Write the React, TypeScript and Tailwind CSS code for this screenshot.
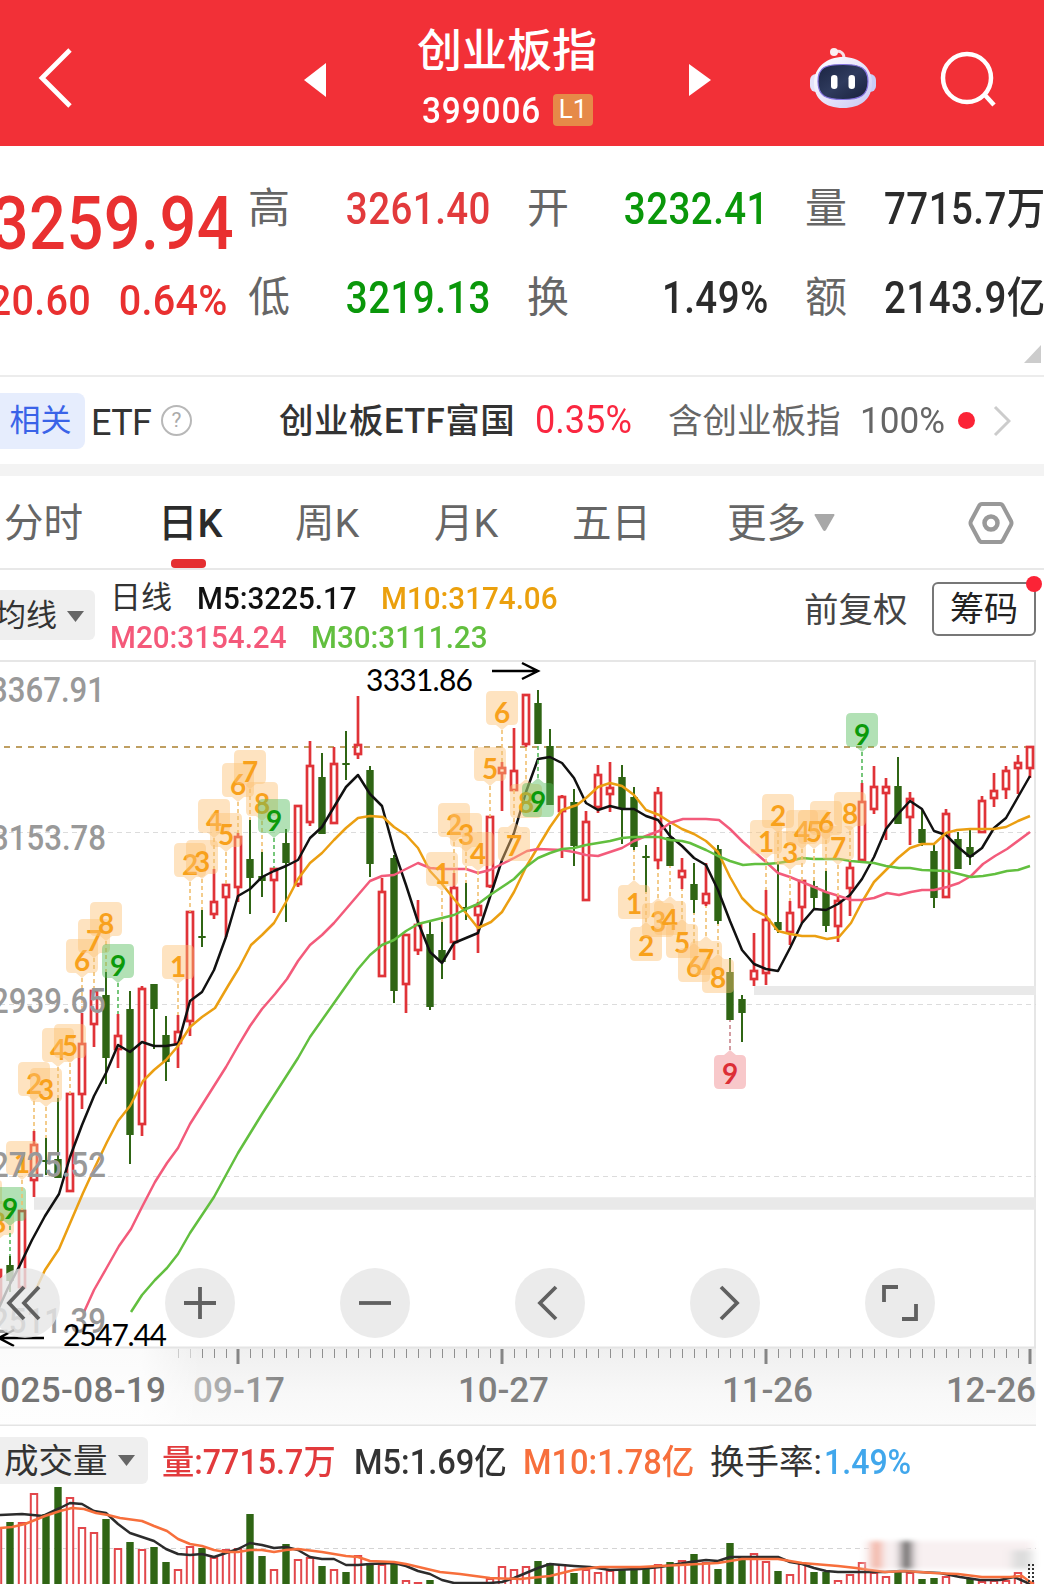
import type { ReactNode } from "react";

type Candle = [number, number, number, number, "r" | "g"];
type Badge = [number, number, number, "o" | "g" | "r", "up" | "down", number];

const STEP = 12;
const FIRST_X = -2;

// high, bodyTop, bodyBottom, low, colour
const candles: Candle[] = [
  [1270, 1270, 1302, 1302, "r"], [1256, 1265, 1281, 1292, "g"], [1210, 1211, 1287, 1287, "r"],
  [1131, 1145, 1180, 1197, "r"], [1138, 1160, 1162, 1175, "g"], [1098, 1159, 1178, 1178, "g"],
  [1094, 1094, 1191, 1191, "r"], [1013, 1044, 1094, 1109, "r"], [990, 991, 1024, 1047, "r"],
  [972, 995, 1058, 1084, "g"], [1014, 1036, 1049, 1068, "r"], [991, 1009, 1135, 1164, "g"],
  [986, 989, 1124, 1136, "r"], [984, 984, 1009, 1049, "g"], [1016, 1035, 1062, 1081, "g"],
  [1015, 1032, 1043, 1068, "r"], [912, 912, 1021, 1036, "r"], [910, 936, 938, 947, "g"],
  [869, 902, 914, 919, "r"], [884, 885, 897, 937, "r"], [833, 837, 887, 902, "r"],
  [820, 859, 878, 914, "g"], [852, 876, 881, 897, "g"], [868, 869, 880, 913, "r"],
  [829, 843, 863, 922, "g"], [805, 806, 884, 887, "r"], [741, 766, 822, 826, "r"],
  [753, 777, 834, 834, "g"], [747, 764, 823, 823, "r"], [731, 763, 765, 780, "g"],
  [696, 745, 754, 759, "r"], [766, 770, 864, 877, "g"], [878, 892, 976, 976, "r"],
  [855, 858, 991, 1003, "g"], [934, 935, 984, 1013, "r"], [900, 925, 950, 955, "r"],
  [922, 934, 1007, 1010, "g"], [922, 950, 962, 979, "g"], [873, 888, 942, 960, "r"],
  [883, 907, 909, 920, "g"], [902, 906, 915, 953, "r"], [817, 817, 886, 888, "r"],
  [762, 768, 773, 811, "r"], [728, 771, 790, 790, "r"], [694, 695, 744, 747, "r"],
  [690, 703, 744, 744, "g"], [729, 746, 805, 805, "g"], [795, 797, 811, 858, "r"],
  [789, 802, 846, 866, "g"], [811, 822, 900, 900, "r"], [765, 775, 807, 813, "r"],
  [762, 788, 794, 812, "r"], [765, 777, 809, 844, "g"], [787, 797, 847, 850, "g"],
  [845, 856, 858, 892, "g"], [787, 793, 860, 869, "r"], [825, 837, 866, 866, "g"],
  [858, 871, 877, 889, "r"], [863, 884, 900, 913, "g"], [863, 894, 903, 906, "r"],
  [845, 849, 921, 924, "g"], [958, 972, 1020, 1020, "g"], [995, 999, 1013, 1042, "g"],
  [933, 971, 979, 986, "r"], [890, 920, 973, 985, "r"], [864, 922, 930, 933, "g"],
  [901, 913, 932, 945, "r"], [881, 881, 907, 923, "r"], [881, 886, 898, 910, "g"],
  [871, 892, 926, 932, "g"], [896, 901, 926, 942, "r"], [861, 868, 888, 916, "r"],
  [783, 802, 860, 860, "r"], [766, 787, 809, 814, "r"], [778, 787, 793, 840, "r"],
  [757, 786, 824, 824, "g"], [792, 799, 817, 845, "r"], [809, 829, 843, 846, "g"],
  [843, 851, 898, 908, "g"], [809, 814, 897, 897, "r"], [832, 839, 869, 869, "g"],
  [830, 847, 857, 865, "g"], [796, 801, 832, 832, "r"], [773, 791, 798, 807, "r"],
  [766, 771, 789, 799, "r"], [755, 763, 768, 794, "r"], [746, 747, 768, 778, "r"],
];

const volumeTops: number[] = [
  1527, 1522, 1522, 1493, 1514, 1487, 1497, 1527, 1532, 1519, 1548, 1542, 1549, 1547, 1562,
  1569, 1546, 1548, 1557, 1549, 1548, 1514, 1556, 1569, 1544, 1559, 1557, 1566, 1569, 1572,
  1555, 1563, 1564, 1563, 1580, 1582, 1580, 1590, 1590, 1590, 1590, 1578, 1566, 1569, 1566,
  1561, 1563, 1564, 1573, 1569, 1572, 1570, 1569, 1568, 1568, 1564, 1562, 1560, 1554, 1562,
  1569, 1543, 1558, 1553, 1561, 1571, 1574, 1563, 1572, 1572, 1580, 1574, 1562, 1572, 1576,
  1572, 1572, 1579, 1578, 1576, 1584, 1579, 1581, 1580, 1580, 1572, 1582,
];
const volumeGreen = [
  1, 4, 5, 9, 11, 13, 14, 17, 21, 22, 24, 27, 29, 31, 33, 36, 45, 46, 48, 52, 53, 54, 56, 58, 60,
  61, 62, 65, 68, 69, 75, 77, 78, 80, 81,
];

const ma5 =
  "-2,1310 8,1288 20,1265 32,1240 45,1216 59,1194 70,1157 82,1125 94,1096 106,1073 118,1045 130,1052 142,1042 154,1046 166,1046 178,1044 190,1001 202,992 214,970 226,937 238,896 250,889 262,877 274,871 286,866 298,860 310,838 322,827 334,807 346,787 358,775 370,794 382,806 394,850 406,885 418,922 430,952 442,963 454,943 466,938 478,933 490,897 502,860 514,833 526,792 538,759 550,757 562,763 574,778 586,803 598,810 610,806 622,809 634,809 646,816 658,820 670,836 682,846 694,858 706,865 718,890 730,921 742,950 754,964 766,969 778,971 790,948 802,923 814,909 826,910 838,904 850,895 862,879 874,857 886,829 898,814 910,801 922,809 934,831 946,835 958,847 970,857 982,848 994,828 1006,818 1018,797 1030,776";
const ma10 =
  "34,1292 38,1285 45,1270 59,1249 71,1221 83,1193 95,1167 107,1142 118,1121 130,1106 143,1081 154,1070 166,1060 178,1046 190,1027 202,1017 215,1008 228,986 239,968 251,945 262,935 274,923 286,902 298,879 310,863 322,853 334,840 346,828 358,818 370,816 383,817 394,827 406,835 418,848 430,871 442,884 454,899 466,913 478,928 491,922 502,912 514,892 526,867 538,847 550,827 562,810 577,805 586,798 598,787 610,783 622,786 634,795 646,810 659,815 670,822 682,829 694,834 706,841 718,852 730,877 742,898 754,910 766,916 778,931 790,934 802,936 815,936 827,939 839,937 851,923 862,902 874,882 886,870 898,858 910,848 922,844 934,844 946,833 957,830 970,829 994,829 1006,827 1018,821 1030,816";
const ma20 =
  "84,1312 94,1290 106,1269 119,1246 131,1229 142,1207 155,1182 167,1163 178,1148 190,1124 202,1105 226,1067 238,1046 250,1026 262,1009 275,994 287,979 298,961 310,945 322,935 334,923 352,902 370,881 382,876 394,875 406,869 418,863 430,868 442,869 466,869 478,873 490,870 502,864 514,858 527,851 538,849 562,850 574,852 586,855 598,856 610,852 622,848 634,841 646,836 659,831 670,823 683,819 694,819 706,819 719,820 730,829 743,842 766,862 778,873 790,877 802,882 814,887 826,892 839,896 851,900 862,900 874,898 887,893 899,895 911,892 922,890 934,890 947,887 959,883 971,876 983,864 995,856 1007,849 1030,832";
const ma30 =
  "131,1312 142,1295 155,1280 167,1268 178,1254 190,1233 214,1197 238,1153 262,1114 298,1058 310,1037 334,1003 358,969 370,955 382,945 394,940 406,931 418,924 430,921 454,915 466,909 478,904 490,895 514,879 526,867 538,858 550,853 562,849 574,848 586,845 610,841 622,838 634,837 646,837 659,837 670,840 682,841 690,843 706,850 718,856 730,861 743,865 755,864 766,864 778,863 790,861 802,858 814,859 839,859 851,861 862,862 874,863 886,866 899,868 910,868 922,870 947,871 959,874 971,877 983,876 995,874 1007,871 1018,870 1030,866";

const vol5 =
  "0,1515 22,1514 43,1516 60,1508 70,1503 82,1504 94,1511 106,1513 118,1524 130,1533 142,1537 154,1541 166,1549 178,1554 190,1555 202,1554 214,1557 226,1553 238,1549 250,1543 262,1545 274,1548 286,1547 298,1550 310,1557 322,1559 334,1559 346,1565 358,1565 370,1564 394,1563 406,1566 418,1571 430,1574 442,1580 454,1583 490,1583 502,1582 514,1578 526,1573 538,1568 550,1564 562,1565 574,1566 590,1567 610,1570 640,1569 660,1567 690,1562 706,1560 718,1561 730,1557 742,1557 778,1557 790,1562 802,1564 814,1568 826,1571 838,1572 870,1572 885,1572 900,1571 920,1572 940,1573 960,1577 980,1580 1000,1580 1014,1577 1030,1584";
const vol10 =
  "0,1528 12,1527 25,1524 45,1516 60,1511 72,1508 84,1509 96,1513 108,1515 120,1518 142,1521 154,1526 167,1531 178,1539 190,1544 202,1546 214,1550 226,1552 238,1552 250,1550 262,1550 274,1552 286,1550 298,1549 322,1552 346,1556 358,1557 370,1561 394,1562 406,1564 440,1572 460,1574 490,1578 520,1579 550,1576 574,1570 600,1567 640,1567 680,1565 718,1563 742,1559 778,1559 802,1563 826,1565 838,1566 856,1568 885,1572 905,1571 934,1573 958,1574 982,1577 1010,1577 1022,1576 1033,1584";

// x, box top, digit, colour, pointer direction, stem end
const badges: Badge[] = [
  [-2, 1201, 8, "o", "down", 1270], [10, 1187, 9, "g", "down", 1256], [22, 1141, 1, "o", "down", 1210],
  [34, 1062, 2, "o", "down", 1131], [46, 1068, 3, "o", "down", 1138], [58, 1028, 4, "o", "down", 1098],
  [70, 1024, 5, "o", "down", 1094], [82, 939, 6, "o", "down", 1013], [94, 919, 7, "o", "down", 990],
  [106, 902, 8, "o", "down", 972], [118, 944, 9, "g", "down", 1014],
  [178, 945, 1, "o", "down", 1015], [190, 843, 2, "o", "down", 912], [202, 840, 3, "o", "down", 910],
  [214, 799, 4, "o", "down", 869], [226, 813, 5, "o", "down", 884], [238, 763, 6, "o", "down", 833],
  [250, 750, 7, "o", "down", 820], [262, 782, 8, "o", "down", 852], [274, 799, 9, "g", "down", 868],
  [442, 852, 1, "o", "down", 922], [454, 803, 2, "o", "down", 873], [466, 813, 3, "o", "down", 883],
  [478, 832, 4, "o", "down", 902], [490, 747, 5, "o", "down", 817], [502, 691, 6, "o", "down", 762],
  [514, 827, 7, "o", "up", 790], [526, 784, 8, "o", "up", 747], [538, 783, 9, "g", "up", 744],
  [634, 885, 1, "o", "up", 850], [646, 927, 2, "o", "up", 892], [658, 903, 3, "o", "up", 869],
  [670, 901, 4, "o", "up", 866], [682, 924, 5, "o", "up", 889], [694, 948, 6, "o", "up", 913],
  [706, 941, 7, "o", "up", 906], [718, 959, 8, "o", "up", 924], [730, 1055, 9, "r", "up", 1020],
  [766, 820, 1, "o", "down", 890], [778, 794, 2, "o", "down", 864], [790, 831, 3, "o", "down", 901],
  [802, 810, 4, "o", "down", 881], [814, 810, 5, "o", "down", 881], [826, 801, 6, "o", "down", 871],
  [838, 826, 7, "o", "down", 896], [850, 792, 8, "o", "down", 861], [862, 713, 9, "g", "down", 783],
];

const badgeColors = {
  o: { box: "#fcc273", text: "#f8a11c", stem: "#f0c070" },
  g: { box: "#55bd5a", text: "#0b9a0b", stem: "#55b95a" },
  r: { box: "#f0858a", text: "#dc2f36", stem: "#c9848a" },
};

const axisLabels = [
  { text: "3367.91", y: 702, end: 105 },
  { text: "3153.78", y: 850, end: 106 },
  { text: "2939.65", y: 1013, end: 106 },
  { text: "2725.52", y: 1177, end: 106 },
  { text: "2511.39", y: 1333, end: 106 },
];

const dates = [
  { label: "2025-08-19", x: -20, width: 186, fill: "#757575" },
  { label: "09-17", x: 193, width: 92, fill: "url(#fade)" },
  { label: "10-27", x: 458, width: 91, fill: "#808080" },
  { label: "11-26", x: 722, width: 91, fill: "#808080" },
  { label: "12-26", x: 946, width: 90, fill: "#808080" },
];

function Header() {
  return (
    <header className="flex h-[146px] items-center bg-[#f23037] text-white">
      <svg className="ml-[38px] mt-2.5 h-[60px] w-[34px]" viewBox="0 0 34 60" fill="none">
        <path d="M32 2 4 30l28 28" stroke="currentColor" strokeWidth="4.800" />
      </svg>
      <svg className="ml-[232px] mt-3.5 h-[34px] w-[22px]" viewBox="0 0 22 34">
        <path d="M22 0v34L0 17z" fill="currentColor" />
      </svg>
      <div className="ml-[81px] w-[200px] pt-[7px]">
        <h1 className="h-[52px] text-center text-[45px] font-medium leading-[52px]">创业板指</h1>
        <div className="mt-3.5 flex h-9 items-center pl-[15px]">
          <span className="w-[131px] origin-left scale-x-[.89] pt-0.5 text-[37.500px] font-medium tracking-[1px]">
            399006
          </span>
          <span className="flex h-8 w-10 items-center justify-center rounded-sm bg-[#e68a48] text-[26px]">L1</span>
        </div>
      </div>
      <svg className="ml-[82px] mt-3.5 h-8 w-[22px]" viewBox="0 0 22 32">
        <path d="M0 0v32l22-16z" fill="currentColor" />
      </svg>
      <svg className="ml-[99px] mt-2.5 h-[62px] w-[66px]" viewBox="0 0 66 62">
        <defs>
          <linearGradient id="shell" x1="0" y1="0" x2="1" y2="1">
            <stop offset="0" stopColor="#fff" />
            <stop offset="0.5" stopColor="#e9e6fb" />
            <stop offset="1" stopColor="#c5c6f2" />
          </linearGradient>
          <linearGradient id="visor" x1="0" y1="0" x2="1" y2="1">
            <stop offset="0" stopColor="#1b2442" />
            <stop offset="0.5" stopColor="#2f3b5e" />
            <stop offset="1" stopColor="#18203c" />
          </linearGradient>
        </defs>
        <path d="M25 5c5-2 9 1 9 6" fill="none" stroke="#f6dfe6" strokeWidth="3" />
        <circle cx="24" cy="5" r="4" fill="#fbeef2" />
        <rect x="0" y="27" width="12" height="18" rx="6" fill="#e4e2fa" />
        <rect x="54" y="27" width="12" height="18" rx="6" fill="#c9cdf6" />
        <path d="M33 10c16 0 29 10 29 26S51 61 33 61 4 52 4 36s13-26 29-26z" fill="url(#shell)" />
        <path d="M33 17.500c17 0 25 3 25 17S50 52.500 33 52.500 8 49 8 34.500s8-17 25-17z" fill="url(#visor)" stroke="#8674e0" strokeWidth="1.200" />
        <rect x="21" y="28" width="6.500" height="14" rx="3.200" fill="#fff" />
        <rect x="38.500" y="28" width="6.500" height="14" rx="3.200" fill="#fff" />
      </svg>
      <svg className="ml-[63px] mt-3.5 h-[58px] w-[58px]" viewBox="0 0 58 58" fill="none" stroke="currentColor" strokeWidth="4.500">
        <circle cx="28" cy="27" r="24" />
        <path d="m45 43 10 11" />
      </svg>
    </header>
  );
}

function Quote({ label, value, color }: { label: string; value: string; color: string }) {
  return (
    <div className="flex h-[89px] items-center justify-between whitespace-nowrap">
      <span className="text-[42px] text-[#666]">{label}</span>
      <span className={`origin-right scale-x-[.885] pt-0.5 text-[43.500px] font-medium tracking-[0.5px] ${color}`}>
        {value}
      </span>
    </div>
  );
}

function QuotePanel() {
  return (
    <section className="relative flex h-[231px] overflow-hidden border-b-2 border-[#ececec]">
      <div className="flex w-[248px] shrink-0 flex-col items-end pr-[14px] pt-[31px] font-medium whitespace-nowrap text-[#e93030]">
        <div className="h-[93px] origin-right scale-x-[.865] text-[75px] leading-[93px] tracking-[0.5px]">3259.94</div>
        <div className="mr-[6px] flex h-[61px] origin-right scale-x-[.92] items-center gap-[30px] text-[43px] tracking-[0.3px]">
          <span>20.60</span>
          <span>0.64%</span>
        </div>
      </div>
      <div className="grid h-[178px] grid-cols-[243px_242px_241px] gap-x-[36px] pt-[18px]">
        <Quote label="高" value="3261.40" color="text-[#e23a3c]" />
        <Quote label="开" value="3232.41" color="text-[#0a970a]" />
        <Quote label="量" value="7715.7万" color="text-[#2b2b2b]" />
        <Quote label="低" value="3219.13" color="text-[#0a970a]" />
        <Quote label="换" value="1.49%" color="text-[#2b2b2b]" />
        <Quote label="额" value="2143.9亿" color="text-[#2b2b2b]" />
      </div>
      <svg className="absolute bottom-3 right-[3px] h-[18px] w-[17px]" viewBox="0 0 17 18">
        <path d="M17 0v18H0z" fill="#ccc" />
      </svg>
    </section>
  );
}

function EtfRow() {
  return (
    <section className="flex h-[99px] items-center border-b-[12px] border-[#f3f3f3] whitespace-nowrap text-[#333]">
      <span className="flex h-14 w-[85px] items-center justify-center rounded-r-lg bg-[#e6edfd] pr-1 pt-0.5 text-[31px] text-[#3a63e8]">
        相关
      </span>
      <span className="ml-1.5 w-[63px] pt-1 text-[36px] tracking-[-0.6px]">ETF</span>
      <span className="ml-[7px] flex size-[31px] items-center justify-center rounded-full border-2 border-[#b8b8b8] text-[21px] text-[#aaa]">
        ?
      </span>
      <span className="ml-[87px] w-[256px] pt-0.5 text-[34.500px] font-medium tracking-[0.5px]">创业板ETF富国</span>
      <span className="w-[133px] origin-left scale-x-95 text-[38px] text-[#fa2740]">0.35%</span>
      <span className="w-[192px] pt-0.5 text-[34.500px] text-[#666]">含创业板指</span>
      <span className="w-[98px] origin-left scale-x-95 text-[37px] text-[#666]">100%</span>
      <span className="size-[17px] rounded-full bg-[#fb2336]" />
      <svg className="ml-[18px] h-8 w-[18px]" viewBox="0 0 18 32" fill="none">
        <path d="m2 2 14 14L2 30" stroke="#ccc" strokeWidth="3" />
      </svg>
    </section>
  );
}

const tabs = [
  { label: "分时", className: "w-[154px]" },
  { label: "日K", className: "w-[137px] font-medium text-[#2b2b2b]" },
  { label: "周K", className: "w-[139px]" },
  { label: "月K", className: "w-[138px]" },
  { label: "五日", className: "w-[155px]" },
  { label: "更多", className: "w-[80px]" },
];

function Tabs() {
  return (
    <nav className="flex h-[94px] items-center border-b-2 border-[#e8e8e8] pl-1 text-[39.500px] whitespace-nowrap text-[#666]">
      {tabs.map((tab) => (
        <span key={tab.label} className={`relative flex h-full items-center pt-1 ${tab.className}`}>
          {tab.label}
          {tab.label === "日K" && (
            <i className="absolute bottom-0 left-[13px] h-[9px] w-[35px] rounded-[4px] bg-[#e52f31]" />
          )}
        </span>
      ))}
      <svg className="ml-[7px] h-[17px] w-[21px]" viewBox="0 0 21 17">
        <path d="M1 0h19q1 1 0 2l-8 14q-1.500 2-3 0L1 2Q0 1 1 0z" fill="#a8a8a8" />
      </svg>
      <svg className="ml-[133px] mt-0.5 h-[44px] w-[46px]" viewBox="0 0 46 44" fill="none" stroke="#999">
        <path d="M14 3h18q2 0 3 2l8 15q1 2 0 4l-8 15q-1 2-3 2H14q-2 0-3-2L3 24q-1-2 0-4L11 5q1-2 3-2z" strokeWidth="4" />
        <circle cx="23" cy="22" r="6.500" strokeWidth="4.500" />
      </svg>
    </nav>
  );
}

function Dropdown({ children, className }: { children: ReactNode; className: string }) {
  return (
    <button className={`flex shrink-0 items-center rounded-r-md bg-[#efefef] whitespace-nowrap text-[#333] ${className}`}>
      {children}
      <svg className="ml-2.5 h-[11px] w-[17px] shrink-0" viewBox="0 0 17 11">
        <path d="M0 0h17L8.500 11z" fill="#666" />
      </svg>
    </button>
  );
}

function AverageBar() {
  return (
    <section className="flex h-[91px] items-start whitespace-nowrap">
      <Dropdown className="mt-5 h-[50px] w-[95px] justify-end pr-[11px] pt-0.5 text-[31px]">均线</Dropdown>
      <div className="ml-[15px] mt-[7px] w-[694px] text-[32px]">
        <div className="flex h-[41px] items-center text-[#111]">
          <span className="w-[87px] pt-0.5 text-[31px] text-[#333]">日线</span>
          <span className="w-[184px] origin-left scale-x-[.925] font-medium">M5:3225.17</span>
          <span className="origin-left scale-x-[.925] font-medium text-[#eba00d]">M10:3174.06</span>
        </div>
        <div className="flex h-[38px] items-center font-medium">
          <span className="w-[201px] origin-left scale-x-[.925] text-[#f4597a]">M20:3154.24</span>
          <span className="origin-left scale-x-[.925] text-[#62bf3f]">M30:3111.23</span>
        </div>
      </div>
      <span className="mt-[18px] w-[128px] text-[34.500px] leading-[44px] text-[#444]">前复权</span>
      <button className="relative mt-3 flex h-[54px] w-[104px] items-center justify-center rounded-md border-2 border-[#777] text-[34px] text-[#222]">
        筹码
        <i className="absolute -right-2 -top-2 size-4 rounded-full bg-[#fb2336]" />
      </button>
    </section>
  );
}

function Callout({ badge }: { badge: Badge }) {
  const [x, top, digit, color, dir, end] = badge;
  const c = badgeColors[color];
  const stemStart = dir === "down" ? top + 39 : top - 5;
  const d =
    dir === "down"
      ? `M${x - 11} ${top}h22q5 0 5 5v24q0 5-5 5h-5l-6 5-6-5h-5q-5 0-5-5v-24q0-5 5-5z`
      : `M${x - 11} ${top}h5l6-5 6 5h5q5 0 5 5v24q0 5-5 5h-22q-5 0-5-5v-24q0-5 5-5z`;
  return (
    <g>
      <line x1={x} x2={x} y1={stemStart} y2={end} stroke={c.stem} strokeWidth="1.600" strokeDasharray="4 3" />
      <path d={d} fill={c.box} fillOpacity="0.450" />
      <text x={x} y={top + (dir === "down" ? 32 : 29)} textAnchor="middle" fontSize="28" fontWeight="700" fill={c.text} className="font-[Lato,sans-serif]">
        {digit}
      </text>
    </g>
  );
}

function CandleChart() {
  return (
    <svg className="block h-[766px] w-full" viewBox="0 660 1044 766">
      <defs>
        <linearGradient id="axis" x1="0" y1="0" x2="0" y2="1">
          <stop offset="0" stopColor="#efefef" />
          <stop offset="0.600" stopColor="#f8f8f8" />
          <stop offset="1" stopColor="#fbfbfb" />
        </linearGradient>
        <linearGradient id="fade" x1="0" y1="0" x2="1" y2="0">
          <stop offset="0" stopColor="#bbb" />
          <stop offset="1" stopColor="#858585" />
        </linearGradient>
        <linearGradient id="veil" x1="0" y1="0" x2="1" y2="0">
          <stop offset="0.700" stopColor="#fff" stopOpacity="0.750" />
          <stop offset="1" stopColor="#fff" stopOpacity="0" />
        </linearGradient>
      </defs>
      <path d="M0 661h1035v687" fill="none" stroke="#e6e6e6" strokeWidth="2" />
      <g stroke="#dcdcdc" strokeDasharray="5 4">
        <path d="M0 832.500h1036M0 1004.500h1036M0 1176.500h1036" />
      </g>
      <path d="M754 990.500h282" stroke="#e9e9e9" strokeWidth="9" />
      <path d="M34 1203.500h1002" stroke="#e9e9e9" strokeWidth="12.500" />
      <path d="M4 747h1032" stroke="#bf9f62" strokeWidth="1.800" strokeDasharray="6 6" />

      {candles.map(([high, top, bottom, low, color], i) => {
        const x = FIRST_X + i * STEP;
        if (color === "g") {
          return (
            <g key={i} fill="#2f6514">
              <rect x={x - 1} y={high} width="2" height={low - high} />
              <rect x={x - 3.7} y={top} width="7.400" height={Math.max(bottom - top, 2)} />
            </g>
          );
        }
        return (
          <g key={i} stroke="#e03338" strokeWidth="2.700" fill="none">
            <path d={`M${x} ${high}V${top}M${x} ${bottom}V${low}`} strokeWidth="2.700" />
            <rect x={x - 3} y={top} width="6" height={Math.max(bottom - top, 2)} />
          </g>
        );
      })}

      <g fill="none" strokeWidth="2.500" strokeLinejoin="round">
        <polyline points={ma5} stroke="#111" />
        <polyline points={ma10} stroke="#eb9f12" />
        <polyline points={ma20} stroke="#f35b7b" />
        <polyline points={ma30} stroke="#62bf3f" />
      </g>

      <path d="M-14 1180h12q4 0 4 4v20h-16z" fill="#fcc273" fillOpacity="0.450" />
      {badges.map((badge) => (
        <Callout key={badge[0]} badge={badge} />
      ))}

      <g fill="#999" fontSize="35" fontWeight="500">
        {axisLabels.map((label) => (
          <text key={label.text} x={label.end - 115} y={label.y} textLength="115" lengthAdjust="spacingAndGlyphs">
            {label.text}
          </text>
        ))}
      </g>
      <g fontSize="30" fill="#000" className="font-[Lato,sans-serif]">
        <text x="366" y="691" textLength="107">3331.86</text>
        <text x="63" y="1346" textLength="104">2547.44</text>
      </g>
      <g fill="none" stroke="#000" strokeWidth="2.400">
        <path d="M492 671h45M522 663l16 8-16 8" />
        <path d="M44 1338H1M14 1330l-15 8 15 8" />
      </g>

      <rect x="0" y="1348" width="1036" height="77" fill="url(#axis)" />
      <rect x="0" y="1348" width="200" height="77" fill="url(#veil)" />
      <path d="M0 1347.500h1036M0 1425.500h1036" stroke="#e4e4e4" strokeWidth="2" />
      {Array.from({ length: 72 }, (_, i) => 178 + i * STEP).map((x) =>
        (x - 238) % 264 === 0 ? (
          <rect key={x} x={x - 1.5} y="1349" width="3" height="15" fill="#858585" />
        ) : (
          <rect key={x} x={x} y="1349" width="1" height="9" fill={x < 200 ? "#ccc" : "#8f8f8f"} />
        )
      )}
      <g fontSize="35" fontWeight="500">
        {dates.map((date) => (
          <text key={date.label} x={date.x} y="1402" textLength={date.width} fill={date.fill}>
            {date.label}
          </text>
        ))}
      </g>
    </svg>
  );
}

const controls = [
  "M34 19 19 35l15 16M49 19 34 35l15 16",
  "M19 35h32M35 19v32",
  "M19 35h32",
  "M41 19 25 35l16 16",
  "M31 19l16 16-16 16",
  "M19 34V19h14M51 36v15H37",
];

function ChartControls() {
  return (
    <div className="absolute -left-2.5 top-[608px] flex gap-[105px]">
      {controls.map((d) => (
        <button key={d} className="size-[70px] rounded-full bg-[#e6e6e6]/80">
          <svg viewBox="0 0 70 70" fill="none" stroke="#606060" strokeWidth="3.800">
            <path d={d} />
          </svg>
        </button>
      ))}
    </div>
  );
}

function Volume() {
  return (
    <section className="h-[158px] overflow-hidden">
      <div className="flex h-[60px] items-start pt-[11px] text-[34.500px] leading-[50px] whitespace-nowrap text-[#333]">
        <Dropdown className="h-[47px] w-[148px] pl-1">成交量</Dropdown>
        <span className="ml-3.5 w-[192px] origin-left scale-x-[.935] font-medium text-[#e23a3c]">量:7715.7万</span>
        <span className="w-[169px] origin-left scale-x-[.945] font-medium">M5:1.69亿</span>
        <span className="w-[187px] origin-left scale-x-[.945] font-medium text-[#f76f3c]">M10:1.78亿</span>
        <span>换手率:</span>
        <span className="ml-0.5 origin-left scale-x-[.93] font-medium text-[#41a7ec]">1.49%</span>
      </div>
      <svg className="block h-[98px] w-full" viewBox="0 1486 1044 98">
        <defs>
          <filter id="smear" x="-20%" y="-20%" width="140%" height="140%">
            <feGaussianBlur stdDeviation="5 2" />
          </filter>
        </defs>
        <path d="M0 1548.500h1036" stroke="#d4d4d4" strokeDasharray="5 4" />
        {volumeTops.map((top, i) => {
          const x = FIRST_X + i * STEP;
          return volumeGreen.includes(i) ? (
            <rect key={i} x={x - 3.7} y={top} width="7.400" height={1590 - top} fill="#2f6514" />
          ) : (
            <rect key={i} x={x - 3.2} y={top + 1} width="6.400" height={1600 - top} fill="#fff" stroke="#e2474b" strokeWidth="2" />
          );
        })}
        <g fill="none" strokeWidth="2.500" strokeLinejoin="round">
          <polyline points={vol5} stroke="#2c2c2c" />
          <polyline points={vol10} stroke="#f76f3c" />
        </g>
        <g filter="url(#smear)">
          <rect x="866" y="1541" width="166" height="28" fill="#f8f0f1" />
          <rect x="872" y="1541" width="9" height="28" fill="#f2a58e" />
          <rect x="901" y="1541" width="11" height="28" fill="#444" />
          <rect x="1012" y="1550" width="20" height="19" fill="#ddd" />
        </g>
        <path d="M1029 1564v20M1033 1564v20" stroke="#333" strokeWidth="2" strokeDasharray="2 2" />
      </svg>
    </section>
  );
}

function App() {
  return (
    <main className="h-[1584px] w-[1044px] overflow-hidden bg-white font-['Roboto','Noto_Sans_CJK_SC',sans-serif]">
      <Header />
      <QuotePanel />
      <EtfRow />
      <Tabs />
      <AverageBar />
      <section className="relative -mt-px h-[766px]">
        <CandleChart />
        <ChartControls />
      </section>
      <Volume />
    </main>
  );
}

export default App;
